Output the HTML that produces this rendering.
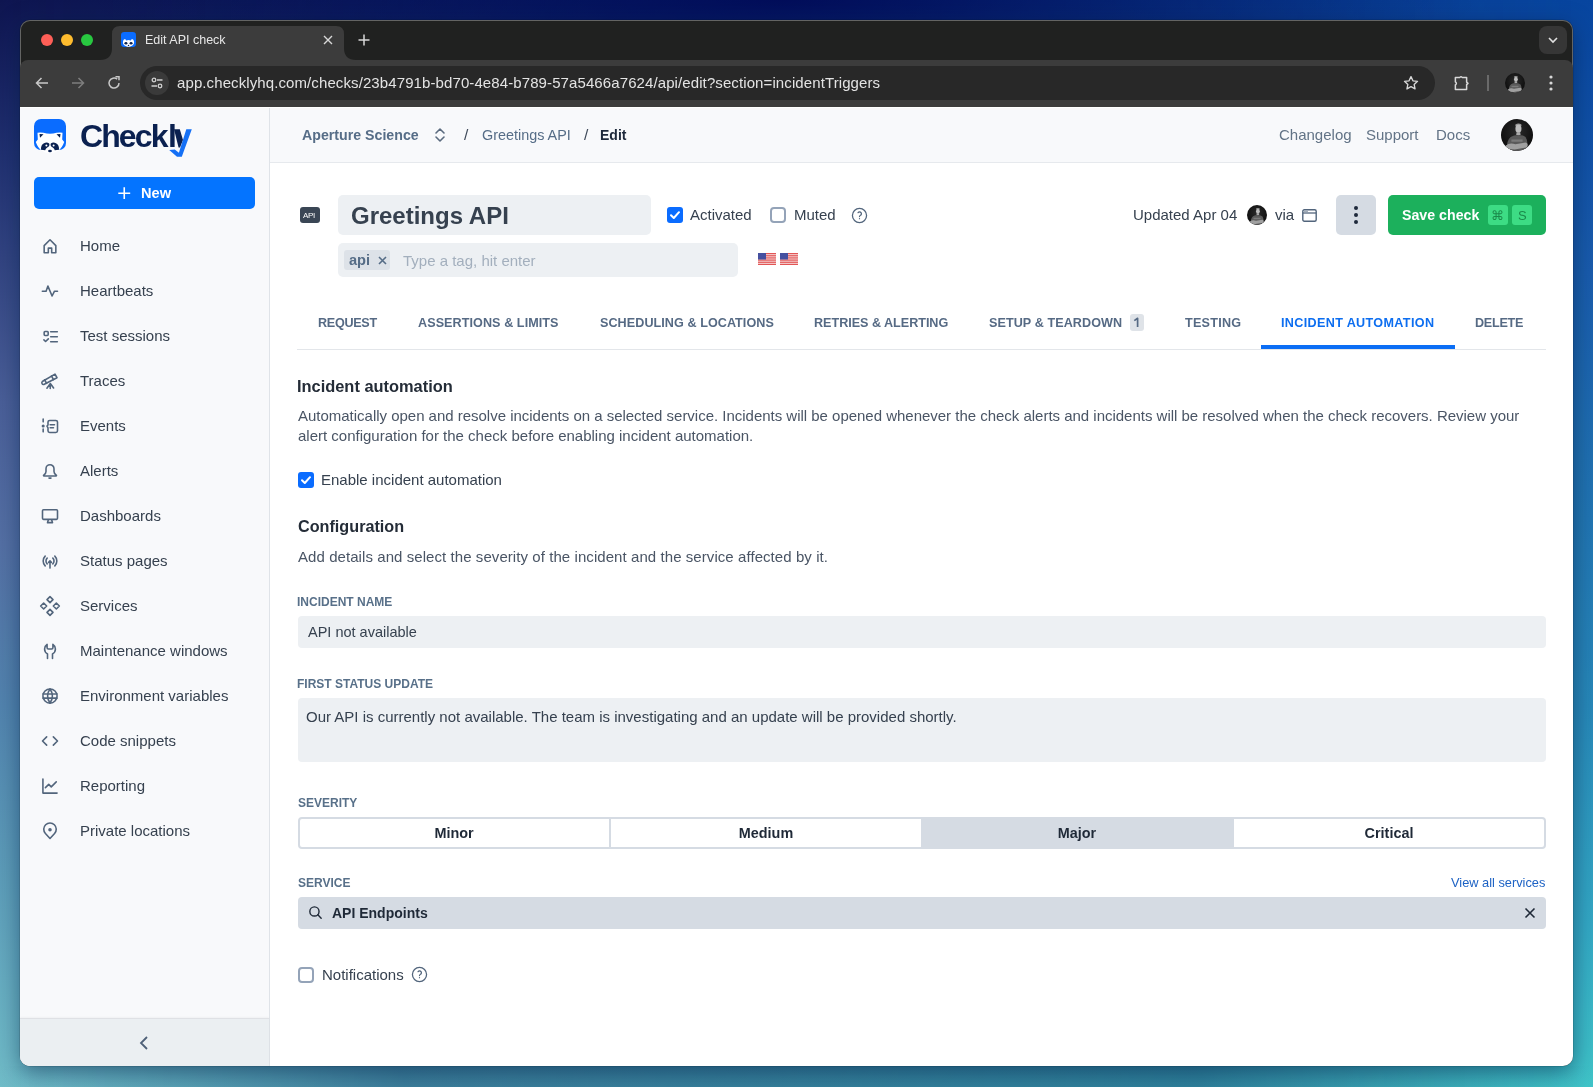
<!DOCTYPE html>
<html><head><meta charset="utf-8"><title>Edit API check</title><style>
*{box-sizing:border-box;margin:0;padding:0}
html,body{width:1593px;height:1087px;overflow:hidden}
body{font-family:"Liberation Sans",sans-serif;position:relative;background:#0b1458}
.t{position:absolute;white-space:nowrap;will-change:transform}
.r{position:absolute}
</style></head><body>
<div class="r" style="left:0;top:0;width:1593px;height:1087px;background:linear-gradient(180deg,#0846a0 0%,#1a5cac 25%,#2070b0 42%,#2888b8 65%,#34a8c4 85%,#40c4c8 100%)"></div>
<div class="r" style="left:0;top:0;width:1593px;height:1087px;background:linear-gradient(180deg,#0e1550 0%,#203070 14%,#4a5f98 37%,#5470a4 50%,#5284ae 65%,#5c9cb8 80%,#70bcc8 100%);-webkit-mask-image:linear-gradient(90deg,#000 0%,rgba(0,0,0,.85) 20%,rgba(0,0,0,.45) 55%,rgba(0,0,0,0) 100%)"></div>
<div class="r" style="left:0;top:0;width:1593px;height:60px;background:radial-gradient(ellipse 700px 90px at 780px 0px,rgba(0,8,85,.85),rgba(0,8,85,0))"></div>
<div class="r" style="left:0;top:1066px;width:1593px;height:21px;background:linear-gradient(90deg,rgba(10,50,100,0) 0%,rgba(10,50,100,.45) 25%,rgba(10,50,100,.45) 75%,rgba(10,50,100,0) 100%)"></div>
<div class="r" style="left:20px;top:20px;width:1552.6px;height:1046.4px;border-radius:10px;background:#202120;box-shadow:0 0 0 0.5px rgba(0,0,0,.2),0 6px 22px rgba(0,30,70,.5)"></div>
<div class="r" style="left:20px;top:20px;width:1552.6px;height:1046.4px;border-radius:10px;border:1px solid rgba(255,255,255,.3);border-bottom:none"></div>
<div class="r" style="left:41px;top:34px;width:12px;height:12px;border-radius:50%;background:#fe5f57"></div>
<div class="r" style="left:61px;top:34px;width:12px;height:12px;border-radius:50%;background:#febc2e"></div>
<div class="r" style="left:81px;top:34px;width:12px;height:12px;border-radius:50%;background:#28c840"></div>
<svg class="r" style="left:100px;top:26px;" width="256" height="34" viewBox="0 0 256 34"><path d="M0 34 Q12 34 12 22 V8 Q12 0 20 0 H236 Q244 0 244 8 V22 Q244 34 256 34 Z" fill="#3c3c3c"/></svg>
<svg class="r" style="left:121px;top:32px;" width="15" height="15" viewBox="0 0 32 32"><rect x="0" y="0" width="32" height="32" rx="7" fill="#0a6cff"/><path d="M4 22 Q5 15 9 15 L11 18 Q16 16 21 18 L23 15 Q27 15 28 22 Q28 30 16 32 Q4 30 4 22Z" fill="#fff"/><ellipse cx="10.5" cy="24" rx="3.2" ry="2.6" fill="#0b2150"/><ellipse cx="21.5" cy="24" rx="3.2" ry="2.6" fill="#0b2150"/><circle cx="16" cy="29" r="1.6" fill="#0b2150"/></svg>
<div class="t " style="left:144.6px;top:34.32px;font-size:12.5px;line-height:12.5px;color:#e6e6e6;font-weight:400;">Edit API check</div>
<svg class="r" style="left:323px;top:35px;" width="10" height="10" viewBox="0 0 10 10"><path d="M1 1L9 9M9 1L1 9" stroke="#d8d8d8" stroke-width="1.4"/></svg>
<svg class="r" style="left:358px;top:34px;" width="12" height="12" viewBox="0 0 12 12"><path d="M6 0.5V11.5M0.5 6H11.5" stroke="#d8d8d8" stroke-width="1.5"/></svg>
<div class="r" style="left:1539px;top:26px;width:28px;height:28px;background:#363636;border-radius:8px"></div>
<svg class="r" style="left:1547px;top:36px;" width="12" height="8" viewBox="0 0 12 8"><path d="M2 2L6 6L10 2" stroke="#e0e0e0" stroke-width="1.6" fill="none"/></svg>
<div class="r" style="left:20px;top:60px;width:1552.6px;height:47px;background:#3c3c3c;border-radius:8px 8px 0 0"></div>
<div class="r" style="left:140px;top:66px;width:1295px;height:34px;background:#282828;border-radius:17px"></div>
<svg class="r" style="left:34px;top:75px;" width="16" height="16" viewBox="0 0 16 16"><path d="M14 8H2.5M7.5 3L2.5 8L7.5 13" stroke="#c8c8c8" stroke-width="1.5" fill="none"/></svg>
<svg class="r" style="left:70px;top:75px;" width="16" height="16" viewBox="0 0 16 16"><path d="M2 8H13.5M8.5 3L13.5 8L8.5 13" stroke="#7e7e7e" stroke-width="1.5" fill="none"/></svg>
<svg class="r" style="left:106px;top:75px;" width="16" height="16" viewBox="0 0 16 16"><path d="M13 8A5 5 0 1 1 11.2 4.2" stroke="#c8c8c8" stroke-width="1.5" fill="none"/><path d="M9.5 1.8H13V5.3" stroke="#c8c8c8" stroke-width="1.5" fill="none"/></svg>
<div class="r" style="left:145px;top:71px;width:24px;height:24px;background:#3a3a3a;border-radius:50%"></div>
<svg class="r" style="left:150px;top:76px;" width="14" height="14" viewBox="0 0 14 14"><circle cx="4" cy="4" r="1.8" stroke="#d0d0d0" stroke-width="1.3" fill="none"/><path d="M7 4H12.5M1.5 10H7" stroke="#d0d0d0" stroke-width="1.3"/><circle cx="10" cy="10" r="1.8" stroke="#d0d0d0" stroke-width="1.3" fill="none"/></svg>
<div class="t " style="left:177.2px;top:75.40px;font-size:15px;line-height:15px;color:#e3e3e3;font-weight:400;letter-spacing:0.1px;">app.checklyhq.com/checks/23b4791b-bd70-4e84-b789-57a5466a7624/api/edit?section=incidentTriggers</div>
<svg class="r" style="left:1402px;top:74px;" width="18" height="18" viewBox="0 0 24 24"><path d="M12 3.5l2.6 5.6 6.1.7-4.5 4.1 1.2 6-5.4-3-5.4 3 1.2-6-4.5-4.1 6.1-.7z" stroke="#d8d8d8" stroke-width="1.8" fill="none" stroke-linejoin="round"/></svg>
<svg class="r" style="left:1452px;top:74px;" width="18" height="18" viewBox="0 0 24 24"><path d="M4.5 4.5H10.5Q12 2.6 13.5 4.5H19.5V10.8L21.3 12.5L19.5 14.2V20.5H4.5V14.5Q7.2 12.5 4.5 10.5Z" stroke="#d8d8d8" stroke-width="2" fill="none" stroke-linejoin="round"/></svg>
<div class="r" style="left:1487px;top:75px;width:1.5px;height:16px;background:#6a6a6a;"></div>
<svg class="r" style="left:1505px;top:73px;" width="20" height="20" viewBox="0 0 40 40"><defs><clipPath id="ac1515"><circle cx="20" cy="20" r="20"/></clipPath><radialGradient id="ag1515" cx="50%" cy="40%" r="60%"><stop offset="0" stop-color="#2a2a2a"/><stop offset="1" stop-color="#0c0c0c"/></radialGradient></defs><g clip-path="url(#ac1515)"><rect width="40" height="40" fill="url(#ag1515)"/><path d="M18 7 Q22 4.5 25.5 7 L25.5 9 Q22 8 18 9Z" fill="#9a9a9a"/><ellipse cx="21.8" cy="12.3" rx="3.8" ry="5" fill="#bcbcbc"/><path d="M19.5 16.5 H24 L24.5 20 H19Z" fill="#a8a8a8"/><path d="M7 40 Q7 26 12 22.5 Q16 20 21.5 20 Q28 20 31 23 Q34 28 33 40 Z" fill="#5a5a5a"/><path d="M6 33 Q11 29 18 31.5 L31 29.5 Q35 31 32 35.5 L17 38 Q10 38 6 36Z" fill="#a0a0a0"/><path d="M13 25.5 H27 V28.5 H13Z" fill="#7a7a7a"/></g></svg>
<svg class="r" style="left:1548px;top:74px;" width="6" height="18" viewBox="0 0 6 18"><circle cx="3" cy="3" r="1.6" fill="#d8d8d8"/><circle cx="3" cy="9" r="1.6" fill="#d8d8d8"/><circle cx="3" cy="15" r="1.6" fill="#d8d8d8"/></svg>
<div class="r" style="left:20px;top:107px;width:1552.6px;height:959.4px;background:#ffffff;border-radius:0 0 10px 10px"></div>
<div class="r" style="left:20px;top:108px;width:250px;height:958.4px;background:#f8f9fb;border-right:1px solid #dfe3e8;border-radius:0 0 0 10px"></div>
<div class="r" style="left:20px;top:1018px;width:249px;height:48.4px;background:#ebeff2;border-top:1px solid #dfe1e5;box-shadow:0 -1px 2px rgba(0,0,0,.035);border-radius:0 0 0 10px"></div>
<svg class="r" style="left:138px;top:1035px;" width="12" height="16" viewBox="0 0 12 16"><path d="M9 2L3 8L9 14" stroke="#4e6078" stroke-width="1.8" fill="none"/></svg>
<div class="r" style="left:270px;top:108px;width:1302.6px;height:55px;background:#f8f9fb;border-bottom:1px solid #e6e9ed"></div>
<svg class="r" style="left:34px;top:119px;" width="32" height="34" viewBox="0 0 32 34"><rect x="0" y="0" width="32" height="31" rx="7" fill="#0a6cff"/><path d="M3.5 13.8 Q6 13.2 9.5 13.8 Q16 15.5 22.5 13.8 Q26 13.2 28.5 13.8 L28.2 20.5 L30.2 23 Q28 29 24.5 31.5 Q20 34.5 16 34 Q12 34.5 7.5 31.5 Q4 29 1.8 23 L3.8 20.5 Z" fill="#fff"/><path d="M5.5 15 L9.5 15.3 L6 18.8Z M26.5 15 L22.5 15.3 L26 18.8Z" fill="#0b2150"/><path d="M7 30.8 Q6.6 26 10 24.2 Q13 22.8 15.2 24.6 Q16.2 27 13.2 28.6 Q11.6 29.6 11.2 31.2 Z" fill="#0b2150"/><path d="M25 30.8 Q25.4 26 22 24.2 Q19 22.8 16.8 24.6 Q15.8 27 18.8 28.6 Q20.4 29.6 20.8 31.2 Z" fill="#0b2150"/><circle cx="12.4" cy="26.4" r="1" fill="#fff"/><circle cx="19.6" cy="26.4" r="1" fill="#fff"/><ellipse cx="16" cy="32" rx="1.9" ry="1.3" fill="#0b2150"/></svg>
<div class="t " style="left:80px;top:119.71px;font-size:32px;line-height:32px;color:#0b2150;font-weight:700;letter-spacing:-1.9px;">Check</div>
<div class="t " style="left:167.6px;top:119.71px;font-size:32px;line-height:32px;color:#0b2150;font-weight:700;">l</div>
<svg class="r" style="left:160px;top:120px;" width="40" height="40" viewBox="160 120 40 40"><path d="M174 129.3 L179.8 129.3 L183 140 L180 147.5 L178.6 147.5 Z" fill="#0b2150"/><path d="M186.3 129.3 L191.8 129.3 L181.8 156.8 L177 156.8 L169.2 150 L174.8 149.6 L178.9 152.8 Z" fill="#1570f5"/></svg>
<div class="r" style="left:34px;top:177px;width:221px;height:32px;background:#0474ff;border-radius:5px"></div>
<svg class="r" style="left:118.3px;top:186.6px;" width="12.5" height="12.5" viewBox="0 0 12.5 12.5"><path d="M6.25 0.3V12.2M0.3 6.25H12.2" stroke="#fff" stroke-width="1.6"/></svg>
<div class="t " style="left:140.7px;top:186.04px;font-size:14.6px;line-height:14.6px;color:#ffffff;font-weight:700;">New</div>
<div class="t " style="left:80.4px;top:238.20px;font-size:15px;line-height:15px;color:#36414f;font-weight:400;">Home</div>
<svg class="r" style="left:40px;top:235.6px;overflow:visible" width="20" height="20" viewBox="0 0 24 24"><g fill="none" stroke="#52657c" stroke-width="1.9" stroke-linecap="round" stroke-linejoin="round"><path d="M5 11.5L12 4.5L19 11.5V20H14V14.5H10V20H5Z" /></g></svg>
<div class="t " style="left:80.4px;top:283.20px;font-size:15px;line-height:15px;color:#36414f;font-weight:400;">Heartbeats</div>
<svg class="r" style="left:40px;top:280.59999999999997px;overflow:visible" width="20" height="20" viewBox="0 0 24 24"><g fill="none" stroke="#52657c" stroke-width="1.9" stroke-linecap="round" stroke-linejoin="round"><path d="M2.8 12.2H7.3L9.5 6.1L14.5 18L17.4 12.2H21"/></g></svg>
<div class="t " style="left:80.4px;top:328.20px;font-size:15px;line-height:15px;color:#36414f;font-weight:400;">Test sessions</div>
<svg class="r" style="left:40px;top:325.59999999999997px;overflow:visible" width="20" height="20" viewBox="0 0 24 24"><g fill="none" stroke="#52657c" stroke-width="1.9" stroke-linecap="round" stroke-linejoin="round"><rect x="5" y="6.5" width="4.8" height="4.8" rx="1"/><path d="M4.7 16.6l2 2l3.3 -3.2M12.8 6.9h8M12.8 12.9h8M12.8 18.9h8"/></g></svg>
<div class="t " style="left:80.4px;top:373.20px;font-size:15px;line-height:15px;color:#36414f;font-weight:400;">Traces</div>
<svg class="r" style="left:40px;top:370.59999999999997px;overflow:visible" width="20" height="20" viewBox="0 0 24 24"><g fill="none" stroke="#52657c" stroke-width="1.9" stroke-linecap="round" stroke-linejoin="round"><path d="M2.8 12.6L18 3.7L20.4 8.1L4.6 16.2Q3 16.5 2.4 15Q1.8 13.4 2.8 12.6Z"/><path d="M5.5 10.5L7.9 14.9M13.8 6L16.2 10.4"/><path d="M12.4 15L8.3 20.6M12.4 15L12.3 20.9M12.4 15L16.3 20.4"/></g></svg>
<div class="t " style="left:80.4px;top:418.20px;font-size:15px;line-height:15px;color:#36414f;font-weight:400;">Events</div>
<svg class="r" style="left:40px;top:415.59999999999997px;overflow:visible" width="20" height="20" viewBox="0 0 24 24"><g fill="none" stroke="#52657c" stroke-width="1.9" stroke-linecap="round" stroke-linejoin="round"><path d="M3.8 3.5v3.5M3.8 15.5v3.5"/><circle cx="3.8" cy="12" r=".9" fill="#52657c"/><path d="M8.4 12l1.2 -1.2v-3.5a2 2 0 0 1 2 -2h7.4a2 2 0 0 1 2 2v10.4a2 2 0 0 1 -2 2h-7.4a2 2 0 0 1 -2 -2v-3.5z"/><path d="M12.2 10.5h5.2M12.2 14h4"/></g></svg>
<div class="t " style="left:80.4px;top:463.20px;font-size:15px;line-height:15px;color:#36414f;font-weight:400;">Alerts</div>
<svg class="r" style="left:40px;top:460.59999999999997px;overflow:visible" width="20" height="20" viewBox="0 0 24 24"><g fill="none" stroke="#52657c" stroke-width="1.9" stroke-linecap="round" stroke-linejoin="round"><path d="M12 4.5a4.8 4.8 0 0 1 4.8 4.8v3.2q0 2.6 2.7 4.4a.6 .6 0 0 1 -.3 1.1H4.8a.6 .6 0 0 1 -.3 -1.1q2.7 -1.8 2.7 -4.4V9.3A4.8 4.8 0 0 1 12 4.5z"/><path d="M10.8 20.5h2.4"/></g></svg>
<div class="t " style="left:80.4px;top:508.20px;font-size:15px;line-height:15px;color:#36414f;font-weight:400;">Dashboards</div>
<svg class="r" style="left:40px;top:505.6px;overflow:visible" width="20" height="20" viewBox="0 0 24 24"><g fill="none" stroke="#52657c" stroke-width="1.9" stroke-linecap="round" stroke-linejoin="round"><rect x="3" y="4.5" width="18" height="11.5" rx="1.2"/><path d="M10 16.5l-1 3.5h6l-1 -3.5"/></g></svg>
<div class="t " style="left:80.4px;top:553.20px;font-size:15px;line-height:15px;color:#36414f;font-weight:400;">Status pages</div>
<svg class="r" style="left:40px;top:550.6px;overflow:visible" width="20" height="20" viewBox="0 0 24 24"><g fill="none" stroke="#52657c" stroke-width="1.9" stroke-linecap="round" stroke-linejoin="round"><path d="M12 12.5v8M10.3 13.6l1.7 -1.7l1.7 1.7"/><path d="M8.6 8.6a4.8 4.8 0 0 0 0 6.8M15.4 8.6a4.8 4.8 0 0 1 0 6.8M6.2 6.2a8.2 8.2 0 0 0 0 11.6M17.8 6.2a8.2 8.2 0 0 1 0 11.6"/></g></svg>
<div class="t " style="left:80.4px;top:598.20px;font-size:15px;line-height:15px;color:#36414f;font-weight:400;">Services</div>
<svg class="r" style="left:40px;top:595.6px;overflow:visible" width="20" height="20" viewBox="0 0 24 24"><g fill="none" stroke="#52657c" stroke-width="1.9" stroke-linecap="round" stroke-linejoin="round"><path d="M12 0.8l3.6 3.6l-3.6 3.6l-3.6 -3.6z M12 16l3.6 3.6l-3.6 3.6l-3.6 -3.6z M4.4 8.4l3.6 3.6l-3.6 3.6l-3.6 -3.6z M19.6 8.4l3.6 3.6l-3.6 3.6l-3.6 -3.6z"/></g></svg>
<div class="t " style="left:80.4px;top:643.20px;font-size:15px;line-height:15px;color:#36414f;font-weight:400;">Maintenance windows</div>
<svg class="r" style="left:40px;top:640.6px;overflow:visible" width="20" height="20" viewBox="0 0 24 24"><g fill="none" stroke="#52657c" stroke-width="1.9" stroke-linecap="round" stroke-linejoin="round"><path d="M9 21V15.5Q5.5 13.5 5.5 9.5Q5.5 6 8.5 4V8Q8.5 9.5 10 9.5H14Q15.5 9.5 15.5 8V4Q18.5 6 18.5 9.5Q18.5 13.5 15 15.5V21"/></g></svg>
<div class="t " style="left:80.4px;top:688.20px;font-size:15px;line-height:15px;color:#36414f;font-weight:400;">Environment variables</div>
<svg class="r" style="left:40px;top:685.6px;overflow:visible" width="20" height="20" viewBox="0 0 24 24"><g fill="none" stroke="#52657c" stroke-width="1.9" stroke-linecap="round" stroke-linejoin="round"><circle cx="12" cy="12" r="8.5"/><path d="M3.5 9.5h17M3.5 14.5h17"/><path d="M12 3.5a14 14 0 0 0 0 17M12 3.5a14 14 0 0 1 0 17"/></g></svg>
<div class="t " style="left:80.4px;top:733.20px;font-size:15px;line-height:15px;color:#36414f;font-weight:400;">Code snippets</div>
<svg class="r" style="left:40px;top:730.6px;overflow:visible" width="20" height="20" viewBox="0 0 24 24"><g fill="none" stroke="#52657c" stroke-width="1.9" stroke-linecap="round" stroke-linejoin="round"><path d="M8 7l-5 5l5 5M16 7l5 5l-5 5"/></g></svg>
<div class="t " style="left:80.4px;top:778.20px;font-size:15px;line-height:15px;color:#36414f;font-weight:400;">Reporting</div>
<svg class="r" style="left:40px;top:775.6px;overflow:visible" width="20" height="20" viewBox="0 0 24 24"><g fill="none" stroke="#52657c" stroke-width="1.9" stroke-linecap="round" stroke-linejoin="round"><path d="M3.5 3.5v17h17"/><path d="M6.5 14l4 -4l3 3l6 -6"/></g></svg>
<div class="t " style="left:80.4px;top:823.20px;font-size:15px;line-height:15px;color:#36414f;font-weight:400;">Private locations</div>
<svg class="r" style="left:40px;top:820.6px;overflow:visible" width="20" height="20" viewBox="0 0 24 24"><g fill="none" stroke="#52657c" stroke-width="1.9" stroke-linecap="round" stroke-linejoin="round"><circle cx="12" cy="10.5" r="1.2" fill="#52657c"/><path d="M12 21l-5.5 -6a7.5 7.5 0 1 1 11 0z"/></g></svg>
<div class="t " style="left:302.4px;top:127.88px;font-size:14.2px;line-height:14.2px;color:#566d87;font-weight:700;">Aperture Science</div>
<svg class="r" style="left:433px;top:127px;" width="14" height="16" viewBox="0 0 14 16"><path d="M3 6L7 2L11 6M3 10L7 14L11 10" stroke="#5b6b7f" stroke-width="1.6" fill="none" stroke-linecap="round" stroke-linejoin="round"/></svg>
<div class="t " style="left:464.3px;top:127.48px;font-size:15.5px;line-height:15.5px;color:#3f4a5a;font-weight:400;">/</div>
<div class="t " style="left:481.5px;top:127.71px;font-size:14.4px;line-height:14.4px;color:#566d87;font-weight:400;">Greetings API</div>
<div class="t " style="left:583.8px;top:127.48px;font-size:15.5px;line-height:15.5px;color:#3f4a5a;font-weight:400;">/</div>
<div class="t " style="left:600px;top:128.05px;font-size:14px;line-height:14px;color:#1e293b;font-weight:700;">Edit</div>
<div class="t " style="left:1279px;top:127.20px;font-size:15px;line-height:15px;color:#627386;font-weight:400;">Changelog</div>
<div class="t " style="left:1366px;top:127.20px;font-size:15px;line-height:15px;color:#627386;font-weight:400;">Support</div>
<div class="t " style="left:1436px;top:127.20px;font-size:15px;line-height:15px;color:#627386;font-weight:400;">Docs</div>
<svg class="r" style="left:1501px;top:119px;" width="32" height="32" viewBox="0 0 40 40"><defs><clipPath id="ac1517"><circle cx="20" cy="20" r="20"/></clipPath><radialGradient id="ag1517" cx="50%" cy="40%" r="60%"><stop offset="0" stop-color="#2a2a2a"/><stop offset="1" stop-color="#0c0c0c"/></radialGradient></defs><g clip-path="url(#ac1517)"><rect width="40" height="40" fill="url(#ag1517)"/><path d="M18 7 Q22 4.5 25.5 7 L25.5 9 Q22 8 18 9Z" fill="#9a9a9a"/><ellipse cx="21.8" cy="12.3" rx="3.8" ry="5" fill="#bcbcbc"/><path d="M19.5 16.5 H24 L24.5 20 H19Z" fill="#a8a8a8"/><path d="M7 40 Q7 26 12 22.5 Q16 20 21.5 20 Q28 20 31 23 Q34 28 33 40 Z" fill="#5a5a5a"/><path d="M6 33 Q11 29 18 31.5 L31 29.5 Q35 31 32 35.5 L17 38 Q10 38 6 36Z" fill="#a0a0a0"/><path d="M13 25.5 H27 V28.5 H13Z" fill="#7a7a7a"/></g></svg>
<div class="r" style="left:300px;top:207px;width:20px;height:16px;background:#3a4655;border-radius:3px"></div>
<div class="t " style="left:302.6px;top:211.83px;font-size:8px;line-height:8px;color:#ffffff;font-weight:400;letter-spacing:-0.3px;">API</div>
<div class="r" style="left:338px;top:195px;width:313px;height:40px;background:#edf0f3;border-radius:5px"></div>
<div class="t " style="left:350.5px;top:203.98px;font-size:24px;line-height:24px;color:#36414f;font-weight:700;">Greetings API</div>
<div class="r" style="left:667px;top:207px;width:16px;height:16px;background:#0a6cff;border-radius:3px"></div>
<svg class="r" style="left:667px;top:207px;" width="16" height="16" viewBox="0 0 16 16"><path d="M4 8.2L6.8 11L12 5.2" stroke="#fff" stroke-width="2" fill="none" stroke-linecap="round" stroke-linejoin="round"/></svg>
<div class="t " style="left:690px;top:207.40px;font-size:15px;line-height:15px;color:#36414f;font-weight:400;">Activated</div>
<div class="r" style="left:770px;top:207px;width:16px;height:16px;background:#ffffff;border:2px solid #94a3b8;border-radius:4px"></div>
<div class="t " style="left:793.7px;top:207.40px;font-size:15px;line-height:15px;color:#36414f;font-weight:400;">Muted</div>
<svg class="r" style="left:851px;top:207px;" width="17" height="17" viewBox="0 0 24 24"><g fill="none" stroke="#52657c" stroke-width="1.8" stroke-linecap="round"><circle cx="12" cy="12" r="10"/><path d="M12 16.5v.01M12 13.5a1.5 1.5 0 0 1 1 -1.5a2.6 2.6 0 1 0 -3 -4"/></g></svg>
<div class="r" style="left:338px;top:243px;width:400px;height:34px;background:#edf0f3;border-radius:5px"></div>
<div class="r" style="left:344px;top:250px;width:46px;height:20px;background:#dde2e8;border-radius:3px"></div>
<div class="t " style="left:348.6px;top:253.24px;font-size:14.6px;line-height:14.6px;color:#566d87;font-weight:700;">api</div>
<svg class="r" style="left:377.5px;top:255.8px;" width="9" height="9" viewBox="0 0 9 9"><path d="M1 1L8 8M8 1L1 8" stroke="#566d87" stroke-width="1.6"/></svg>
<div class="t " style="left:402.6px;top:252.90px;font-size:15px;line-height:15px;color:#a3afbd;font-weight:400;">Type a tag, hit enter</div>
<svg class="r" style="left:758px;top:253px;" width="18" height="12" viewBox="0 0 18 12"><rect width="18" height="12" fill="#f6d8d8"/><rect x="0" y="0.00" width="18" height="0.9" fill="#e04848"/><rect x="0" y="1.85" width="18" height="0.9" fill="#e04848"/><rect x="0" y="3.69" width="18" height="0.9" fill="#e04848"/><rect x="0" y="5.54" width="18" height="0.9" fill="#e04848"/><rect x="0" y="7.38" width="18" height="0.9" fill="#e04848"/><rect x="0" y="9.23" width="18" height="0.9" fill="#e04848"/><rect x="0" y="11.08" width="18" height="0.9" fill="#e04848"/><rect width="8" height="6.5" fill="#4550a0"/></svg>
<svg class="r" style="left:780px;top:253px;" width="18" height="12" viewBox="0 0 18 12"><rect width="18" height="12" fill="#f6d8d8"/><rect x="0" y="0.00" width="18" height="0.9" fill="#e04848"/><rect x="0" y="1.85" width="18" height="0.9" fill="#e04848"/><rect x="0" y="3.69" width="18" height="0.9" fill="#e04848"/><rect x="0" y="5.54" width="18" height="0.9" fill="#e04848"/><rect x="0" y="7.38" width="18" height="0.9" fill="#e04848"/><rect x="0" y="9.23" width="18" height="0.9" fill="#e04848"/><rect x="0" y="11.08" width="18" height="0.9" fill="#e04848"/><rect width="8" height="6.5" fill="#4550a0"/></svg>
<div class="t " style="left:1133.2px;top:207.10px;font-size:15px;line-height:15px;color:#36414f;font-weight:400;">Updated Apr 04</div>
<svg class="r" style="left:1247px;top:205px;" width="20" height="20" viewBox="0 0 40 40"><defs><clipPath id="ac1257"><circle cx="20" cy="20" r="20"/></clipPath><radialGradient id="ag1257" cx="50%" cy="40%" r="60%"><stop offset="0" stop-color="#2a2a2a"/><stop offset="1" stop-color="#0c0c0c"/></radialGradient></defs><g clip-path="url(#ac1257)"><rect width="40" height="40" fill="url(#ag1257)"/><path d="M18 7 Q22 4.5 25.5 7 L25.5 9 Q22 8 18 9Z" fill="#9a9a9a"/><ellipse cx="21.8" cy="12.3" rx="3.8" ry="5" fill="#bcbcbc"/><path d="M19.5 16.5 H24 L24.5 20 H19Z" fill="#a8a8a8"/><path d="M7 40 Q7 26 12 22.5 Q16 20 21.5 20 Q28 20 31 23 Q34 28 33 40 Z" fill="#5a5a5a"/><path d="M6 33 Q11 29 18 31.5 L31 29.5 Q35 31 32 35.5 L17 38 Q10 38 6 36Z" fill="#a0a0a0"/><path d="M13 25.5 H27 V28.5 H13Z" fill="#7a7a7a"/></g></svg>
<div class="t " style="left:1275.3px;top:207.10px;font-size:15px;line-height:15px;color:#36414f;font-weight:400;">via</div>
<svg class="r" style="left:1301.5px;top:208.5px;" width="15" height="13" viewBox="0 0 15 13"><rect x="0.8" y="0.8" width="13.4" height="11.4" rx="1.5" stroke="#52657c" stroke-width="1.4" fill="none"/><path d="M0.8 4H14.2" stroke="#52657c" stroke-width="1.3"/><circle cx="3" cy="2.4" r=".6" fill="#52657c"/><circle cx="5" cy="2.4" r=".6" fill="#52657c"/></svg>
<div class="r" style="left:1336px;top:195px;width:40px;height:40px;background:#d5dbe3;border-radius:5px"></div>
<div class="r" style="left:1354px;top:206px;width:4px;height:4px;border-radius:50%;background:#1e293b"></div>
<div class="r" style="left:1354px;top:213px;width:4px;height:4px;border-radius:50%;background:#1e293b"></div>
<div class="r" style="left:1354px;top:220px;width:4px;height:4px;border-radius:50%;background:#1e293b"></div>
<div class="r" style="left:1388px;top:195px;width:158px;height:40px;background:#1cb05c;border-radius:5px"></div>
<div class="t " style="left:1402.3px;top:208.38px;font-size:14.2px;line-height:14.2px;color:#ffffff;font-weight:700;">Save check</div>
<div class="r" style="left:1488px;top:205px;width:20px;height:20px;background:#3ddc84;border-radius:3px"></div>
<div class="t " style="left:1491px;top:208.50px;font-size:13px;line-height:13px;color:#1a8a4a;font-weight:400;">&#8984;</div>
<div class="r" style="left:1512px;top:205px;width:20px;height:20px;background:#3ddc84;border-radius:3px"></div>
<div class="t " style="left:1518px;top:208.50px;font-size:13px;line-height:13px;color:#1a8a4a;font-weight:400;">S</div>
<div class="t " style="left:317.8px;top:316.53px;font-size:12.6px;line-height:12.6px;color:#566a84;font-weight:700;letter-spacing:-0.3px;">REQUEST</div>
<div class="t " style="left:418px;top:316.53px;font-size:12.6px;line-height:12.6px;color:#566a84;font-weight:700;letter-spacing:0.07px;">ASSERTIONS &amp; LIMITS</div>
<div class="t " style="left:599.8px;top:316.53px;font-size:12.6px;line-height:12.6px;color:#566a84;font-weight:700;letter-spacing:0.06px;">SCHEDULING &amp; LOCATIONS</div>
<div class="t " style="left:814.4px;top:316.53px;font-size:12.6px;line-height:12.6px;color:#566a84;font-weight:700;letter-spacing:-0.02px;">RETRIES &amp; ALERTING</div>
<div class="t " style="left:988.7px;top:316.53px;font-size:12.6px;line-height:12.6px;color:#566a84;font-weight:700;letter-spacing:0.07px;">SETUP &amp; TEARDOWN</div>
<div class="t " style="left:1184.5px;top:316.53px;font-size:12.6px;line-height:12.6px;color:#566a84;font-weight:700;letter-spacing:0.25px;">TESTING</div>
<div class="t " style="left:1281px;top:316.53px;font-size:12.6px;line-height:12.6px;color:#0d6ef0;font-weight:700;letter-spacing:0.35px;">INCIDENT AUTOMATION</div>
<div class="t " style="left:1475.2px;top:316.53px;font-size:12.6px;line-height:12.6px;color:#566a84;font-weight:700;letter-spacing:-0.25px;">DELETE</div>
<div class="r" style="left:1130px;top:314px;width:14px;height:17px;background:#dfe3e8;border-radius:3px"></div>
<svg class="r" style="left:1130px;top:314px;" width="14" height="17" viewBox="0 0 14 17"><path d="M7.6 13V4.3L4.3 6.6" stroke="#566a84" stroke-width="1.7" fill="none" stroke-linejoin="round"/></svg>
<div class="r" style="left:297px;top:349px;width:1249px;height:1px;background:#e3e6ea;"></div>
<div class="r" style="left:1261px;top:345px;width:194px;height:4px;background:#0b6ef5;"></div>
<div class="t " style="left:296.6px;top:378.02px;font-size:16.4px;line-height:16.4px;color:#242c37;font-weight:700;">Incident automation</div>
<div class="t " style="left:297.5px;top:408.40px;font-size:15px;line-height:15px;color:#4a5565;font-weight:400;letter-spacing:-0.015px;">Automatically open and resolve incidents on a selected service. Incidents will be opened whenever the check alerts and incidents will be resolved when the check recovers. Review your</div>
<div class="t " style="left:297.5px;top:428.10px;font-size:15px;line-height:15px;color:#4a5565;font-weight:400;">alert configuration for the check before enabling incident automation.</div>
<div class="r" style="left:298px;top:472px;width:16px;height:16px;background:#0a6cff;border-radius:3px"></div>
<svg class="r" style="left:298px;top:472px;" width="16" height="16" viewBox="0 0 16 16"><path d="M4 8.2L6.8 11L12 5.2" stroke="#fff" stroke-width="2" fill="none" stroke-linecap="round" stroke-linejoin="round"/></svg>
<div class="t " style="left:320.7px;top:472.30px;font-size:15px;line-height:15px;color:#36414f;font-weight:400;">Enable incident automation</div>
<div class="t " style="left:297.5px;top:518.29px;font-size:16.2px;line-height:16.2px;color:#242c37;font-weight:700;">Configuration</div>
<div class="t " style="left:297.5px;top:548.50px;font-size:15px;line-height:15px;color:#4a5565;font-weight:400;letter-spacing:0.07px;">Add details and select the severity of the incident and the service affected by it.</div>
<div class="t " style="left:297.2px;top:596.04px;font-size:12px;line-height:12px;color:#587089;font-weight:700;">INCIDENT NAME</div>
<div class="r" style="left:297.5px;top:616px;width:1248.5px;height:32px;background:#edf0f3;border-radius:4px"></div>
<div class="t " style="left:307.8px;top:624.93px;font-size:14.5px;line-height:14.5px;color:#36414f;font-weight:400;">API not available</div>
<div class="t " style="left:297.2px;top:678.34px;font-size:12px;line-height:12px;color:#587089;font-weight:700;">FIRST STATUS UPDATE</div>
<div class="r" style="left:297.5px;top:698px;width:1248.5px;height:64px;background:#edf0f3;border-radius:4px"></div>
<div class="t " style="left:305.8px;top:709.30px;font-size:15px;line-height:15px;color:#36414f;font-weight:400;">Our API is currently not available. The team is investigating and an update will be provided shortly.</div>
<div class="t " style="left:297.5px;top:797.14px;font-size:12px;line-height:12px;color:#587089;font-weight:700;">SEVERITY</div>
<div class="r" style="left:298px;top:817px;width:1248px;height:32px;background:#ffffff;border:2px solid #d5dbe3;border-radius:4px"></div>
<div class="r" style="left:609px;top:817px;width:2px;height:32px;background:#d5dbe3;"></div>
<div class="r" style="left:921px;top:817px;width:313px;height:32px;background:#d5dbe3;"></div>
<div class="t" style="left:254.0px;width:400px;text-align:center;top:825.81px;font-size:14.4px;line-height:14.4px;color:#1f2937;font-weight:700;">Minor</div>
<div class="t" style="left:565.5px;width:400px;text-align:center;top:825.81px;font-size:14.4px;line-height:14.4px;color:#1f2937;font-weight:700;">Medium</div>
<div class="t" style="left:877.0px;width:400px;text-align:center;top:825.81px;font-size:14.4px;line-height:14.4px;color:#1f2937;font-weight:700;">Major</div>
<div class="t" style="left:1188.5px;width:400px;text-align:center;top:825.81px;font-size:14.4px;line-height:14.4px;color:#1f2937;font-weight:700;">Critical</div>
<div class="t " style="left:297.5px;top:877.24px;font-size:12px;line-height:12px;color:#587089;font-weight:700;">SERVICE</div>
<div class="t" style="right:47.5px;top:876.86px;font-size:12.8px;line-height:12.8px;color:#1d62c4;font-weight:400;">View all services</div>
<div class="r" style="left:297.5px;top:897px;width:1248.5px;height:32px;background:#d5dbe3;border-radius:4px"></div>
<svg class="r" style="left:307px;top:904px;" width="17" height="17" viewBox="0 0 24 24"><g fill="none" stroke="#1f2937" stroke-width="2" stroke-linecap="round"><circle cx="10.5" cy="10.5" r="6.5"/><path d="M20 20l-4.7 -4.7"/></g></svg>
<div class="t " style="left:331.8px;top:906.15px;font-size:14px;line-height:14px;color:#1f2937;font-weight:700;">API Endpoints</div>
<svg class="r" style="left:1524px;top:907px;" width="12" height="12" viewBox="0 0 12 12"><path d="M1.5 1.5L10.5 10.5M10.5 1.5L1.5 10.5" stroke="#1f2937" stroke-width="1.6"/></svg>
<div class="r" style="left:298px;top:967px;width:16px;height:16px;background:#ffffff;border:2px solid #94a3b8;border-radius:4px"></div>
<div class="t " style="left:321.8px;top:967.30px;font-size:15px;line-height:15px;color:#36414f;font-weight:400;">Notifications</div>
<svg class="r" style="left:410.5px;top:966px;" width="17" height="17" viewBox="0 0 24 24"><g fill="none" stroke="#52657c" stroke-width="1.8" stroke-linecap="round"><circle cx="12" cy="12" r="10"/><path d="M12 16.5v.01M12 13.5a1.5 1.5 0 0 1 1 -1.5a2.6 2.6 0 1 0 -3 -4"/></g></svg>
</body></html>
